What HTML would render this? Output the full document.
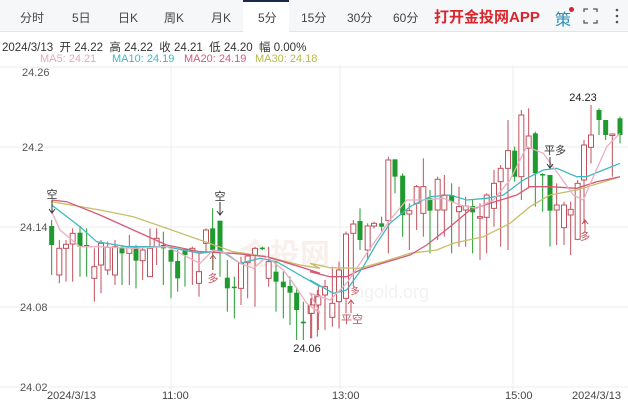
<!DOCTYPE html>
<html><head><meta charset="utf-8"><style>
*{margin:0;padding:0;box-sizing:border-box}
body{width:628px;height:402px;overflow:hidden;background:#fff;font-family:"Liberation Sans","Noto Sans CJK SC",sans-serif;position:relative}
.tb{position:absolute;left:0;top:0;width:628px;height:32px;background:#f6f7f9;border-bottom:1px solid #e3e4e8}
.tb span{position:absolute;top:9px;font-size:12px;color:#444}
.act{position:absolute;left:243px;top:0;width:46px;height:33px;background:#fff;border-top:2px solid #1c2a4a}
.app{position:absolute;left:434px;top:6px;font-size:15px;font-weight:bold;color:#d8262d}
.info{position:absolute;left:2px;top:39px;font-size:11.5px;color:#333}
.ma{position:absolute;top:53px;font-size:11px}
svg{position:absolute;left:0;top:0}
</style></head><body>
<div class="tb">
<div class="act"></div>
<span style="left:20px">分时</span><span style="left:72px">5日</span><span style="left:118px">日K</span><span style="left:164px">周K</span><span style="left:211px">月K</span><span style="left:258px">5分</span><span style="left:301px">15分</span><span style="left:347px">30分</span><span style="left:393px">60分</span>
<div class="app">打开金投网APP</div>
<span style="left:555px;top:6px;font-size:16px;color:#2a8fb5">策</span>
<div style="position:absolute;left:569px;top:7px;width:5px;height:5px;border-radius:50%;background:#d8262d"></div>
<svg width="628" height="32" style="left:0;top:0"><g stroke="#555" stroke-width="1.3" fill="none"><path d="M584 12v-3h4M593 9h4v3M597 20v3h-4M588 23h-4v-3"/></g><g fill="#555"><circle cx="617" cy="10" r="1.3"/><circle cx="617" cy="16" r="1.3"/><circle cx="617" cy="22" r="1.3"/></g></svg>
</div>
<div class="info">2024/3/13&nbsp; 开 24.22&nbsp; 高 24.22&nbsp; 收 24.21&nbsp; 低 24.20&nbsp; 幅 0.00%</div>
<div class="ma" style="left:40px;color:#e4a9bd">MA5: 24.21</div>
<div class="ma" style="left:112px;color:#3fb9bf">MA10: 24.19</div>
<div class="ma" style="left:184px;color:#d55a78">MA20: 24.19</div>
<div class="ma" style="left:255px;color:#b8b84a">MA30: 24.18</div>
<svg id="c" width="628" height="402"></svg>
<script>
var s='';
function L(x1,y1,x2,y2,c,w){s+='<line x1="'+x1+'" y1="'+y1+'" x2="'+x2+'" y2="'+y2+'" stroke="'+c+'" stroke-width="'+(w||1)+'"/>';}
function T(x,y,t,c,sz,a){s+='<text x="'+x+'" y="'+y+'" fill="'+c+'" font-size="'+(sz||11)+'" text-anchor="'+(a||'start')+'" font-family="Liberation Sans,Noto Sans CJK SC,sans-serif">'+t+'</text>';}
[67,147,227,307,387].forEach(function(y){L(0,y,628,y,'#ececec');});
[171,340,513].forEach(function(x){L(x,65,x,390,'#ececec');});
T(22,76,'24.26','#555');T(22,151,'24.2','#555');T(20,231,'24.14','#555');T(20,311,'24.08','#555');T(20,391,'24.02','#555');
T(47,399,'2024/3/13','#444',11);T(162,399,'11:00','#444',11);T(332,399,'13:00','#444',11);T(505,399,'15:00','#444',11);T(572,399,'2024/3/13','#444',11);
s+='<text x="240" y="265" fill="#f9f0ec" font-size="30" font-weight="bold" font-family="Noto Sans CJK SC,sans-serif">金投网</text>';
s+='<text x="345" y="298" fill="#f2f2f2" font-size="18" font-family="Liberation Sans,sans-serif">cngold.org</text>';
var a=[[155,'G',228,285,210,375],[178,'R',295,375,270,400],[198,'R',283,295,270,395],[218,'R',250,282,235,395],[240,'G',248,290,230,380],[260,'G',285,290,235,380],[283,'R',350,385,295,455],[303,'R',280,345,270,430],[323,'R',292,360,275,375],[345,'R',290,375,270,405],[366,'G',292,310,285,405],[388,'R',290,310,255,405],[408,'G',290,332,285,415],[428,'R',300,332,290,390],[450,'R',295,380,235,380],[470,'R',265,290,235,345],[490,'G',285,295,245,405],[513,'G',300,335,295,445],[533,'G',333,385,300,425],[555,'G',298,315,295,410],[577,'R',295,302,290,405],[597,'R',365,400,310,440],[618,'R',240,280,235,310],[638,'G',235,300,175,360],[660,'G',212,305,212,380],[682,'G',383,415,330,485],[703,'G',410,412,380,505],[723,'R',340,415,320,465],[743,'R',318,338,310,445],[765,'R',295,315,290,470],[787,'G',293,296,290,300],[806,'R',335,385,290,410],[828,'G',365,395,335,485],[850,'G',395,412,365,505],[870,'G',408,428,380,525],[890,'G',428,480,412,570],[910,'G',515,520,455,570],[932,'R',465,490,445,565],[952,'R',435,465,420,560]];
var b=[[5,'R',675,700,640,775],[25,'R',650,675,620,750],[45,'R',620,645,600,750],[67,'R',670,712,560,740],[87,'R',570,665,545,745],[108,'R',462,655,455,700],[130,'R',432,460,420,620],[150,'G',423,480,385,510],[173,'R',438,510,430,540],[192,'R',430,438,425,445],[215,'G',430,440,410,455],[235,'R',240,422,230,520],[255,'G',238,290,238,340],[278,'G',287,405,280,470],[298,'R',392,402,370,510],[320,'R',320,370,315,450],[340,'R',320,400,235,470],[360,'G',355,392,330,520],[383,'R',298,390,290,480],[403,'R',345,390,285,470],[425,'G',345,365,310,520],[447,'R',380,395,320,500],[467,'R',378,390,350,500],[488,'G',378,397,360,520],[510,'R',410,412,370,540],[530,'R',345,412,340,520],[552,'R',310,385,270,440],[572,'R',265,305,255,500],[594,'R',212,265,120,510],[614,'G',212,290,200,305],[634,'R',105,290,90,360],[656,'R',168,205,85,325],[676,'G',160,280,155,380],[698,'G',282,286,280,395],[720,'G',285,392,285,500],[740,'R',375,390,310,495],[762,'R',375,443,365,495],[782,'R',388,405,365,525],[803,'R',310,478,300,480],[822,'R',195,300,180,430],[843,'R',165,202,75,250],[867,'G',90,120,85,165],[887,'G',120,165,120,180],[907,'R',162,165,160,290],[930,'G',115,165,110,190]];
function C(x,c,t,bo,h,l){var col=c=='G'?'#1f9a2e':'#c0505a';L(x,h,x,l,col);if(c=='G')s+='<rect x="'+(x-2.5)+'" y="'+t+'" width="5" height="'+Math.max(bo-t,1.5)+'" fill="#1f9a2e"/>';else s+='<rect x="'+(x-2.5)+'" y="'+t+'" width="5" height="'+Math.max(bo-t,1.5)+'" fill="#fff" stroke="#c0505a" stroke-width="1"/>';}
a.forEach(function(d){C(d[0]/3,d[1],150+d[2]/3,150+d[3]/3,150+d[4]/3,150+d[5]/3);});
b.forEach(function(d){C(310+d[0]/3,d[1],80+d[2]/3,80+d[3]/3,80+d[4]/3,80+d[5]/3);});
function P(p2,p3,c){var pts=[];p2.forEach(function(p){pts.push((p[0]/3).toFixed(1)+','+(150+p[1]/3).toFixed(1));});p3.forEach(function(p){pts.push((310+p[0]/3).toFixed(1)+','+(80+p[1]/3).toFixed(1));});s+='<polyline points="'+pts.join(' ')+'" fill="none" stroke="'+c+'" stroke-width="1.3"/>';}
P([[155,155],[300,180],[400,200],[500,235],[600,270],[700,305],[800,320],[900,345],[960,355]],[[0,550],[60,563],[150,565],[220,545],[300,520],[380,510],[430,490],[520,470],[600,430],[660,380],[720,345],[800,330],[850,315],[930,290]],'#c6bf6a');
P([[155,150],[200,155],[300,195],[400,240],[500,285],[600,305],[700,310],[800,320],[900,350],[960,370]],[[0,575],[60,590],[110,590],[150,570],[200,555],[300,525],[350,495],[420,440],[480,390],[540,370],[620,345],[660,320],[720,320],[800,325],[860,305],[930,290]],'#d55a78');
P([[155,165],[240,230],[290,275],[380,290],[500,290],[600,310],[660,300],[720,340],[780,325],[830,335],[960,410]],[[0,600],[70,640],[110,630],[160,560],[200,490],[240,430],[300,380],[360,350],[420,345],[470,360],[530,355],[580,345],[640,300],[700,270],[740,265],[800,290],[830,290],[880,270],[930,250]],'#3fb9bf');
P([[155,185],[180,240],[240,290],[300,290],[400,295],[500,290],[600,340],[640,300],[680,310],[720,340],[760,355],[800,320],[850,360],[880,400],[920,460],[960,490]],[[0,640],[60,660],[110,610],[170,520],[240,420],[290,360],[340,360],[400,355],[450,375],[500,385],[550,360],[600,300],[650,200],[700,220],[740,275],[790,345],[820,360],[850,290],[890,200],[930,160]],'#e8b0c2');
function AD(x,y1,y2,c){L(x,y1,x,y2,c);s+='<path d="M'+(x-3)+' '+(y2-4)+'L'+x+' '+y2+'L'+(x+3)+' '+(y2-4)+'" fill="none" stroke="'+c+'"/>';}
function AU(x,y1,y2,c){L(x,y1,x,y2,c);s+='<path d="M'+(x-3)+' '+(y2+4)+'L'+x+' '+y2+'L'+(x+3)+' '+(y2+4)+'" fill="none" stroke="'+c+'"/>';}
T(52,198,'空','#333',11,'middle');AD(52,200,213,'#333');
T(220,200,'空','#333',11,'middle');AD(220,202,215,'#333');
AU(213,270,255,'#c0505a');T(213,282,'多','#c0505a',11,'middle');
T(307,352,'24.06','#222',11,'middle');
AU(351,313,300,'#c0505a');T(352,323,'平空','#c0505a',11,'middle');
T(355,294,'多','#c0505a',9,'middle');
T(555,154,'平多','#333',11,'middle');AD(550,157,168,'#333');
AU(585,232,220,'#c0505a');T(585,240,'多','#c0505a',10,'middle');
T(583,101,'24.23','#222',11,'middle');
document.getElementById('c').innerHTML=s;
</script>
</body></html>
